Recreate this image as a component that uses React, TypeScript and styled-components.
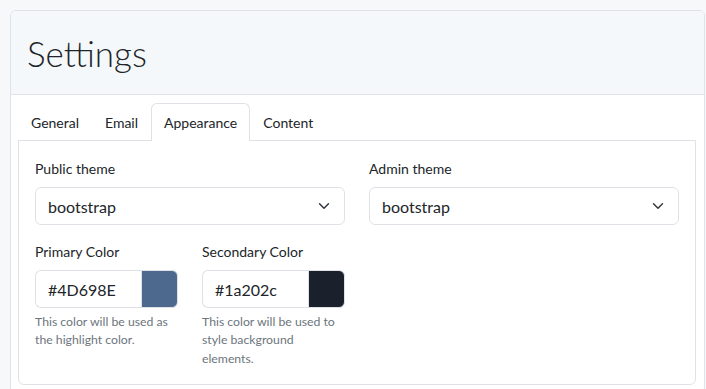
import React from "react";
import styled, { createGlobalStyle } from "styled-components";

const GlobalStyle = createGlobalStyle`
  body {
    margin: 0;
    background: #f7f8fa;
    color: #212529;
    font-family: Lato, "Open Sans", sans-serif;
  }
`;

const tabs = ["General", "Email", "Appearance", "Content"];

const ChevronIcon = () => (
  <svg width="12" height="12" viewBox="0 0 16 16" fill="none">
    <path
      d="M2 5l6 6 6-6"
      stroke="#343a40"
      strokeWidth="2"
      strokeLinecap="round"
      strokeLinejoin="round"
    />
  </svg>
);

interface SelectFieldProps {
  label: string;
  value: string;
}

const SelectField: React.FC<SelectFieldProps> = ({ label, value }) => (
  <Field>
    <Label>{label}</Label>
    <SelectBox>
      <span>{value}</span>
      <ChevronIcon />
    </SelectBox>
  </Field>
);

interface ColorFieldProps {
  label: string;
  value: string;
  help: string;
}

const ColorField: React.FC<ColorFieldProps> = ({ label, value, help }) => (
  <Field>
    <Label>{label}</Label>
    <InputGroup>
      <TextInput>{value}</TextInput>
      <Swatch $color={value} />
    </InputGroup>
    <HelpText>{help}</HelpText>
  </Field>
);

const App: React.FC = () => {
  return (
    <>
      <GlobalStyle />
      <Page>
        <Card>
          <Header>
            <Title>Settings</Title>
          </Header>
          <Body>
            <TabList>
              {tabs.map((tab) => (
                <Tab key={tab} $active={tab === "Appearance"}>
                  {tab}
                </Tab>
              ))}
            </TabList>
            <Panel>
              <Row $cols="1fr 1fr">
                <SelectField label="Public theme" value="bootstrap" />
                <SelectField label="Admin theme" value="bootstrap" />
              </Row>
              <Row $cols="repeat(4, 1fr)">
                <ColorField
                  label="Primary Color"
                  value="#4D698E"
                  help="This color will be used as the highlight color."
                />
                <ColorField
                  label="Secondary Color"
                  value="#1a202c"
                  help="This color will be used to style background elements."
                />
              </Row>
            </Panel>
          </Body>
        </Card>
      </Page>
    </>
  );
};

export default App;

const Page = styled.div`
  padding: 10px 1px 10px 10px;
`;

const Card = styled.div`
  background: #fff;
  border: 1px solid #dfe3e8;
  border-radius: 6px;
  overflow: hidden;
`;

const Header = styled.div`
  background: #f5f8fb;
  border-bottom: 1px solid #dfe3e8;
  height: 83px;
  display: flex;
  align-items: center;
  padding: 0 16px;
`;

const Title = styled.h1`
  margin: 0;
  font-size: 35px;
  font-weight: 300;
  line-height: 1.2;
`;

const Body = styled.div`
  padding: 8px 8px 8px 7px;
`;

const TabList = styled.ul`
  display: flex;
  margin: 0;
  padding: 0;
  list-style: none;
`;

const Tab = styled.li<{ $active?: boolean }>`
  padding: 8px 12px;
  font-size: 14px;
  line-height: 21px;
  border: 1px solid ${({ $active }) => ($active ? "#dee2e6" : "transparent")};
  border-bottom: none;
  border-radius: 6px 6px 0 0;
  background: ${({ $active }) => ($active ? "#fff" : "transparent")};
  margin-bottom: -1px;
  position: relative;
`;

const Panel = styled.div`
  border: 1px solid #dee2e6;
  border-radius: 0 0 6px 6px;
  padding: 17px 16px 16px;
  display: flex;
  flex-direction: column;
  gap: 16px;
`;

const Row = styled.div<{ $cols: string }>`
  display: grid;
  grid-template-columns: ${({ $cols }) => $cols};
  column-gap: 24px;
`;

const Field = styled.div`
  display: flex;
  flex-direction: column;
`;

const Label = styled.label`
  font-size: 14px;
  line-height: 21px;
  margin-bottom: 8px;
`;

const SelectBox = styled.div`
  height: 38px;
  box-sizing: border-box;
  border: 1px solid #dee2e6;
  border-radius: 6px;
  padding: 0 14px 0 12px;
  display: flex;
  align-items: center;
  justify-content: space-between;
  font-size: 16px;
`;

const InputGroup = styled.div`
  display: flex;
  height: 38px;
`;

const TextInput = styled.div`
  flex: 1;
  box-sizing: border-box;
  border: 1px solid #dee2e6;
  border-right: none;
  border-radius: 6px 0 0 6px;
  padding: 0 12px;
  display: flex;
  align-items: center;
  font-size: 16px;
`;

const Swatch = styled.div<{ $color: string }>`
  width: 37px;
  box-sizing: border-box;
  background: ${({ $color }) => $color};
  border: 1px solid #dee2e6;
  border-radius: 0 6px 6px 0;
`;

const HelpText = styled.div`
  margin-top: 5px;
  font-size: 12.25px;
  line-height: 1.5;
  color: #6c757d;
`;
